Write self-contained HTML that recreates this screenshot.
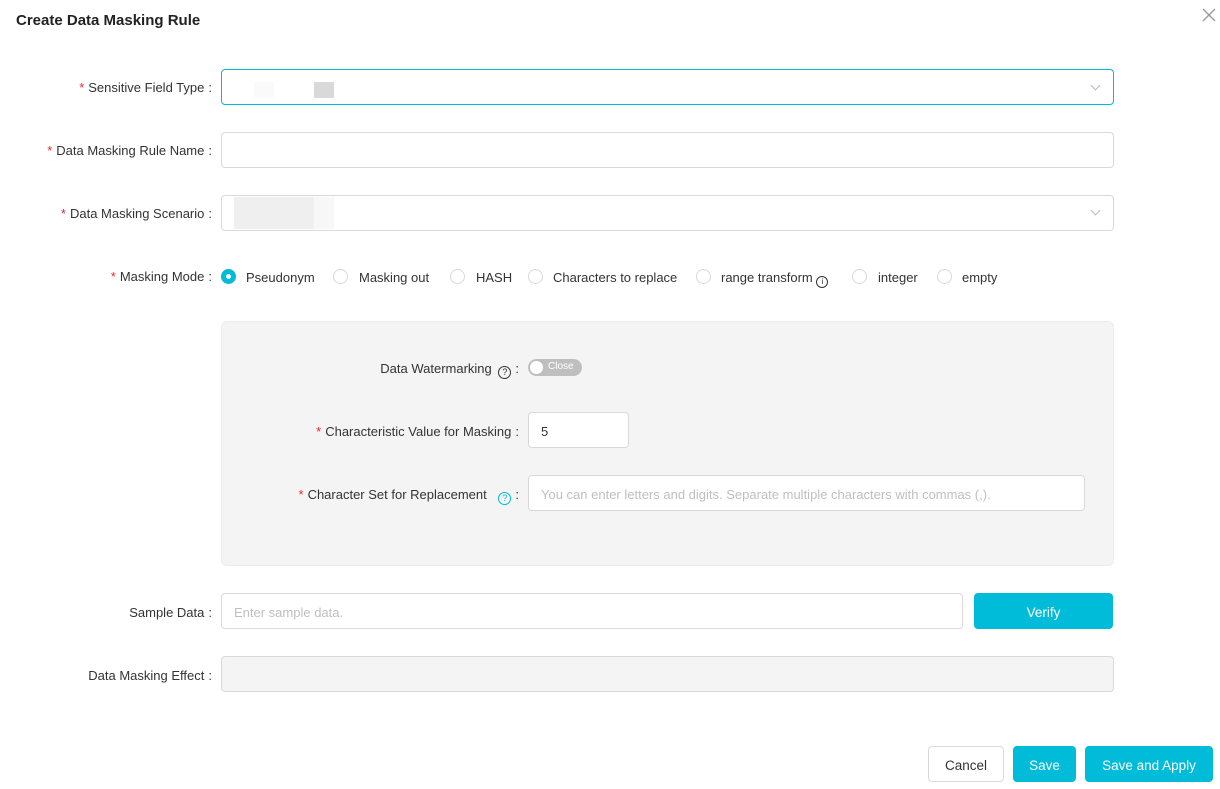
<!DOCTYPE html>
<html><head><style>
*{box-sizing:border-box;margin:0;padding:0}
body{width:1220px;height:789px;background:#fff;font-family:"Liberation Sans",sans-serif;font-size:13px;color:#333;position:relative;overflow:hidden}
.a{position:absolute}
.lbl{position:absolute;right:1008px;white-space:nowrap;color:#333}
.req{color:#f5222d;margin-right:4px}
.c{margin-left:4px}
.inp{position:absolute;border:1px solid #d9d9d9;border-radius:4px;background:#fff}
.ph{color:#bfbfbf}
.radio{position:absolute;width:15px;height:15px;border:1px solid #d9d9d9;border-radius:50%;background:#fff}
.rt{position:absolute;white-space:nowrap}
.chev{position:absolute;width:7px;height:7px;border-right:1px solid #bbb;border-bottom:1px solid #bbb;transform:rotate(45deg)}
.btn{position:absolute;border-radius:4px;text-align:center;color:#fff;background:#00bcd9;font-size:13.5px;line-height:39px}
.ic{display:inline-block;width:13px;height:13px;border:1px solid #333;border-radius:50%;font-size:9px;text-align:center;line-height:11px;vertical-align:-2px}
</style></head><body>
<div class="a" style="left:16px;top:12px;font-size:15px;font-weight:bold;color:#222">Create Data Masking Rule</div>
<svg class="a" style="left:1202px;top:8px" width="14" height="14"><path d="M1 1L13 13M13 1L1 13" stroke="#999" stroke-width="1.3"/></svg>

<div class="lbl" style="top:80px"><span class="req">*</span>Sensitive Field Type<span class="c">:</span></div>
<div class="inp" style="left:221px;top:69px;width:893px;height:36px;border-color:#00bcd9"></div>
<div class="a" style="left:254px;top:82px;width:20px;height:16px;background:#fafafa"></div>
<div class="a" style="left:314px;top:82px;width:20px;height:16px;background:#d9d9d9"></div>
<div class="chev" style="left:1092px;top:82px"></div>

<div class="lbl" style="top:143px"><span class="req">*</span>Data Masking Rule Name<span class="c">:</span></div>
<div class="inp" style="left:221px;top:132px;width:893px;height:36px"></div>

<div class="lbl" style="top:206px"><span class="req">*</span>Data Masking Scenario<span class="c">:</span></div>
<div class="inp" style="left:221px;top:195px;width:893px;height:36px"></div>
<div class="a" style="left:234px;top:197px;width:80px;height:32px;background:#efefef"></div>
<div class="a" style="left:314px;top:197px;width:20px;height:32px;background:#f7f7f7"></div>
<div class="chev" style="left:1092px;top:207px"></div>

<div class="lbl" style="top:269px"><span class="req">*</span>Masking Mode<span class="c">:</span></div>
<div class="radio" style="left:221px;top:269px;border:5px solid #00bcd9"></div>
<div class="rt" style="left:246px;top:270px">Pseudonym</div>
<div class="radio" style="left:333px;top:269px"></div><div class="rt" style="left:359px;top:270px">Masking out</div>
<div class="radio" style="left:450px;top:269px"></div><div class="rt" style="left:476px;top:270px">HASH</div>
<div class="radio" style="left:528px;top:269px"></div><div class="rt" style="left:553px;top:270px">Characters to replace</div>
<div class="radio" style="left:696px;top:269px"></div><div class="rt" style="left:721px;top:270px">range transform <span class="ic" style="width:12px;height:12px;font-size:8px;line-height:10px">i</span></div>
<div class="radio" style="left:852px;top:269px"></div><div class="rt" style="left:878px;top:270px">integer</div>
<div class="radio" style="left:937px;top:269px"></div><div class="rt" style="left:962px;top:270px">empty</div>

<div class="a" style="left:221px;top:321px;width:893px;height:245px;background:#f4f4f4;border:1px solid #ececec;border-radius:6px"></div>
<div class="a" style="right:701px;top:361px;white-space:nowrap">Data Watermarking <span class="ic" style="margin-left:3px">?</span><span class="c">:</span></div>
<div class="a" style="left:528px;top:359px;width:54px;height:17px;border-radius:9px;background:#bfbfbf"></div>
<div class="a" style="left:530px;top:361px;width:13px;height:13px;border-radius:50%;background:#fff"></div>
<div class="a" style="left:548px;top:361px;font-size:10px;color:#fff">Close</div>

<div class="a" style="right:701px;top:424px;white-space:nowrap"><span class="req">*</span>Characteristic Value for Masking<span class="c">:</span></div>
<div class="inp" style="left:528px;top:412px;width:101px;height:36px"></div>
<div class="a" style="left:541px;top:424px">5</div>

<div class="a" style="right:701px;top:487px;white-space:nowrap"><span class="req">*</span>Character Set for Replacement <span class="ic" style="margin-left:8px;border-color:#00bcd9;color:#00bcd9">?</span><span class="c">:</span></div>
<div class="inp" style="left:528px;top:475px;width:557px;height:36px"></div>
<div class="a ph" style="left:541px;top:487px;white-space:nowrap">You can enter letters and digits. Separate multiple characters with commas (,).</div>

<div class="lbl" style="top:605px">Sample Data<span class="c">:</span></div>
<div class="inp" style="left:221px;top:593px;width:742px;height:36px"></div>
<div class="a ph" style="left:234px;top:605px">Enter sample data.</div>
<div class="btn" style="left:974px;top:593px;width:139px;height:36px">Verify</div>

<div class="lbl" style="top:668px">Data Masking Effect<span class="c">:</span></div>
<div class="inp" style="left:221px;top:656px;width:893px;height:36px;background:#f4f4f4"></div>

<div class="btn" style="left:928px;top:746px;width:76px;height:36px;line-height:37px;background:#fff;color:#333;border:1px solid #d9d9d9">Cancel</div>
<div class="btn" style="left:1013px;top:746px;width:63px;height:36px">Save</div>
<div class="btn" style="left:1085px;top:746px;width:128px;height:36px">Save and Apply</div>
</body></html>
